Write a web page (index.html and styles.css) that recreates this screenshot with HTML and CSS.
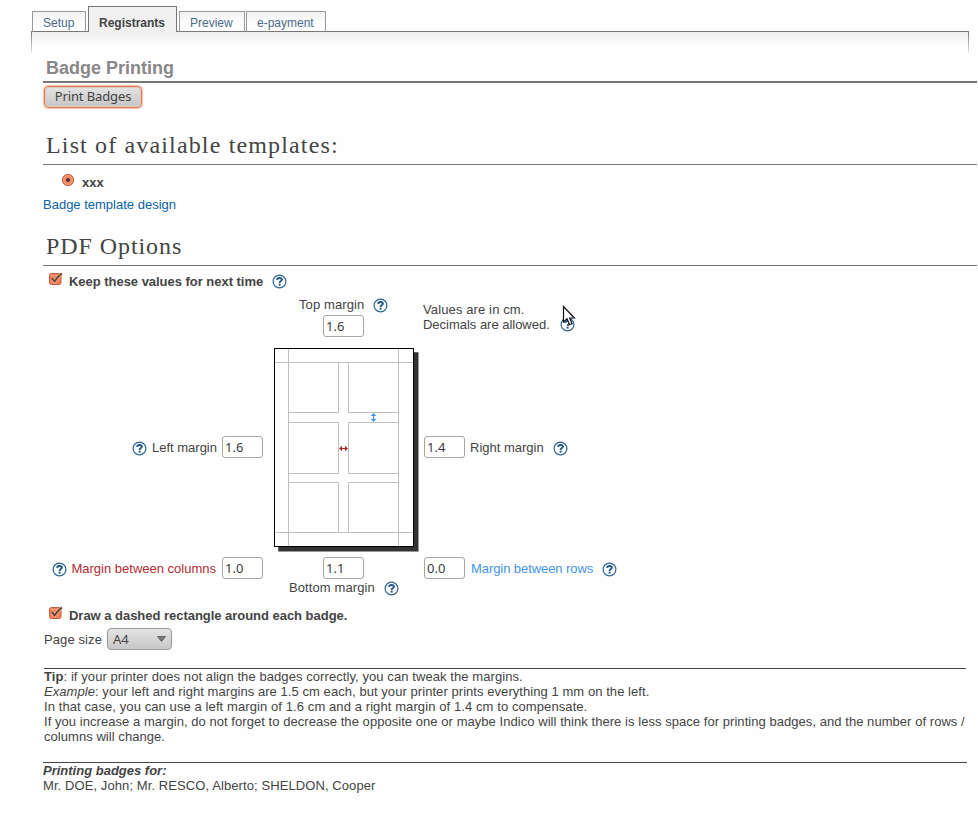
FILE: index.html
```html
<!DOCTYPE html>
<html lang="en">
<head>
<meta charset="utf-8">
<title>Badge Printing</title>
<link rel="stylesheet" href="styles.css">
</head>
<body>
<svg class="defs" width="0" height="0" aria-hidden="true">
  <symbol id="help" viewBox="0 0 15 15">
    <circle cx="7.5" cy="7.5" r="6.4" fill="#fff" stroke="#2f6798" stroke-width="1.2"/>
    <path d="M5.1 5.9C5.2 4.5 6.2 4 7.500 4S9.900 4.700 9.900 5.800C9.900 7.100 7.600 7.100 7.600 8.900" fill="none" stroke="#20568a" stroke-width="1.9"/>
    <rect x="6.600" y="9.700" width="2" height="1.900" fill="#20568a"/>
  </symbol>
  <symbol id="check" viewBox="0 0 16 14">
    <rect x="1.5" y="1.5" width="11.5" height="11" rx="2" fill="#f58259" stroke="#bd5b3d"/>
    <path d="M3 3.5H11" stroke="#f8a183"/>
    <path d="M3.7 6.4L6.6 9.4C8.4 6.2 10.4 3.6 13.9 1.5" fill="none" stroke="#fac0a8" stroke-width="3"/>
    <path d="M3.7 6.2L6.6 9.4C8.4 6.2 10.4 3.6 13.9 1.5" fill="none" stroke="#634036" stroke-width="1.9"/>
  </symbol>
</svg>
<nav class="tabs">
  <a class="tab setup">Setup</a>
  <a class="tab active">Registrants</a>
  <a class="tab preview">Preview</a>
  <a class="tab payment">e-payment</a>
</nav>
<div class="panel-top"></div>
<main>
  <h1>Badge Printing</h1>
  <button class="print">Print Badges</button>
  <h2 class="templates">List of available templates:</h2>
  <div class="template">
    <svg width="14" height="14" viewBox="0 0 14 14"><circle cx="7" cy="7" r="5.7" fill="#f58a62" stroke="#c8603f"/><circle cx="7" cy="7" r="4.3" fill="none" stroke="#f9a384" stroke-width=".8"/><circle cx="7" cy="7" r="2" fill="#4d332b"/></svg>
    <b>xxx</b>
  </div>
  <a class="design">Badge template design</a>
  <h2 class="options">PDF Options</h2>
  <div class="option keep"><svg width="16" height="14"><use href="#check"/></svg><b>Keep these values for next time</b><svg class="help" width="15" height="15"><use href="#help"/></svg></div>
  <section class="margins">
    <div class="top">
      <div class="caption"><span>Top margin</span><svg class="help" width="15" height="15"><use href="#help"/></svg></div>
      <input value="1.6">
    </div>
    <div class="hint">
      <p><span class="cm">Values are in cm.</span><br>Decimals are allowed.</p>
      <svg class="help" width="15" height="15"><use href="#help"/></svg>
      <svg class="cursor" width="14" height="22" viewBox="0 0 14 22"><path d="M1.5 1.5V17L5 13.8L7.6 19.8L10.1 18.7L7.6 13H12.4Z" fill="#fff" stroke="#111" stroke-width="1.2"/></svg>
    </div>
    <div class="side left"><svg class="help" width="15" height="15"><use href="#help"/></svg><span>Left margin</span><input value="1.6"></div>
    <svg class="sheet" width="146" height="205" viewBox="0 0 146 205">
      <rect x="4" y="4" width="141" height="200" rx="1" fill="#999"/>
      <rect x="4.500" y="4.500" width="139.500" height="198.500" fill="#333"/>
      <rect x=".5" y=".5" width="139" height="198" fill="#fff" stroke="#000"/>
      <path d="M14.5 1V198M124.5 1V198M1 14.5H139M1 184.5H139M64.5 15V64.5H15M74.5 15V64.5H124M15 74.5H64.5V125.5H15M124 74.5H74.5V125.5H124M15 134.5H64.5V184M124 134.5H74.5V184" fill="none" stroke="#c0c0c0"/>
      <path d="M99.5 66V73M97.5 67.5H101.5M97.5 71.5H101.5" stroke="#3c92e6"/><path d="M99.500 65L102 68H97ZM99.500 74L102 71H97Z" fill="#3c92e6"/>
      <path d="M66 100.500H73M67.500 98.500V102.500M71.500 98.500V102.500" stroke="#b22222"/><path d="M65 100.500L68 98V103ZM74 100.500L71 98V103Z" fill="#b22222"/>
    </svg>
    <div class="side right"><input value="1.4"><span>Right margin</span><svg class="help" width="15" height="15"><use href="#help"/></svg></div>
    <div class="side left columns"><svg class="help" width="15" height="15"><use href="#help"/></svg><span>Margin between columns</span><input value="1.0"></div>
    <div class="bottom">
      <input value="1.1">
      <div class="caption"><span>Bottom margin</span><svg class="help" width="15" height="15"><use href="#help"/></svg></div>
    </div>
    <div class="side right rows"><input value="0.0"><span>Margin between rows</span><svg class="help" width="15" height="15"><use href="#help"/></svg></div>
  </section>
  <div class="option dashed"><svg width="16" height="14"><use href="#check"/></svg><b>Draw a dashed rectangle around each badge.</b></div>
  <div class="size"><span>Page size</span><div class="select">A4<svg width="9" height="6" viewBox="0 0 9 6"><path d="M.5 .5H8.500L4.500 5.500Z" fill="#777" stroke="#666"/></svg></div></div>
  <div class="tip">
    <p class="intro"><b>Tip</b>: if your printer does not align the badges correctly, you can tweak the margins.</p>
    <p class="example"><i>Example</i>: your left and right margins are 1.5 cm each, but your printer prints everything 1 mm on the left.</p>
    <p class="advice">In that case, you can use a left margin of 1.6 cm and a right margin of 1.4 cm to compensate.</p>
    <p class="warning">If you increase a margin, do not forget to decrease the opposite one or maybe Indico will think there is less space for printing badges, and the number of rows /<br>columns will change.</p>
  </div>
  <div class="people"><b><i>Printing badges for:</i></b><p>Mr. DOE, John; Mr. RESCO, Alberto; SHELDON, Cooper</p></div>
</main>
</body>
</html>
```
FILE: styles.css
```css
* { box-sizing: border-box; }
body { margin: 0; background: #fefefe; color: #444; font: 13px/15px "Liberation Sans", Arial, sans-serif; height: 815px; overflow: hidden; }
svg { display: block; flex: none; }
p { margin: 0; }
.defs { position: absolute; }
.tabs { display: flex; align-items: flex-end; height: 32px; padding-left: 32px; }
.tab { height: 21px; border: 1px solid #999; border-bottom-color: #777; background: linear-gradient(#f1f3f4, #fff 80%); color: #4a6b88; font-size: 12px; line-height: 22px; padding-left: 10px; white-space: nowrap; }
.setup { width: 54px; margin-right: 2px; }
.active { z-index: 1; width: 89px; height: 26px; border-color: #777; border-bottom: 0; background: #f0f0f0; color: #444; font-weight: bold; line-height: 32px; margin-right: 2px; }
.preview { width: 66px; margin-right: 1px; }
.payment { width: 80px; }
.panel-top { display: flex; justify-content: space-between; height: 20px; margin: -1px 9px 0 31px; border-top: 1px solid #777; background: linear-gradient(#f0f0f0, #fefefe 80%); }
.panel-top::before, .panel-top::after { content: ""; width: 1px; height: 20px; background: linear-gradient(#777, #ddd); }
main { padding: 0 1px 0 43px; }
h1 { margin: 0; height: 32px; padding: 7px 0 0 3px; border-bottom: 2px solid #777; color: #888; font-size: 18px; line-height: 20px; }
.print { display: block; width: 98px; height: 22px; margin: 3px 0 0 1px; padding: 0 0 1px; border: 1px solid #dc7d59; border-radius: 4px; box-shadow: inset 0 0 0 1px #e6c9bd, 0 0 1px 1px #f6c1aa; background: linear-gradient(#e4e4e4, #c5c5c5); color: #444; font: 13px/19px "Noto Sans", sans-serif; letter-spacing: -.12px; }
h2 { margin: 0; padding-left: 3px; border-bottom: 1px solid #777; font: 24px/28px "Liberation Serif", serif; letter-spacing: 1.15px; white-space: nowrap; }
.templates { margin-top: 23px; height: 34px; }
.template { display: flex; height: 32px; padding: 8px 0 0 18px; }
.template b { margin: 2px 0 0 7px; }
.design { display: block; height: 35px; color: #0b63a5; }
.options { height: 34px; letter-spacing: .92px; }
.option { display: flex; padding-left: 5px; white-space: nowrap; }
.option b { margin: 2px 0 0 5px; letter-spacing: -.03px; }
.keep { height: 31px; padding-top: 6px; }
.keep .help { margin: 2px 0 0 9px; }
.margins { display: grid; grid-template-columns: 221px 159px 300px; grid-template-rows: 50px 209px 50px; }
.top { grid-column: 2; padding-left: 35px; }
.caption { display: flex; }
.caption span { letter-spacing: .1px; }
.caption .help { margin: 1px 0 0 9px; }
input { display: block; flex: none; width: 41px; height: 22px; padding: 0 0 0 2px; border: 1px solid #aaa69f; border-radius: 3px; outline: 0; background: #fff; color: #3c3c3c; font: 13px/20px "Noto Sans", sans-serif; }
.top input { margin: 2px 0 0 24px; }
.hint { position: relative; display: flex; }
.hint p { margin: 5px 0 0; letter-spacing: -.02px; }
.hint .cm { letter-spacing: .12px; }
.hint .help { margin: 20px 0 0 10px; }
.cursor { position: absolute; left: 139px; top: 8px; }
.side { display: flex; align-items: flex-start; padding-top: 89px; }
.side span { margin: 4px 0 0 5px; }
.side .help { margin: 5px 0 0 9px; }
.left { justify-content: flex-end; padding-right: 1px; }
.left span { margin-right: 5px; }
.left .help { margin: 5px 0 0; }
.right { padding-left: 1px; }
.sheet { margin: 1px 0 0 10px; }
.columns, .rows { padding-top: 1px; }
.columns span { color: #b22c35; margin-left: 4px; margin-right: 6px; }
.rows span { color: #4595e6; margin-left: 6px; letter-spacing: -.07px; }
.bottom { padding: 1px 0 0 25px; }
.bottom input { margin-left: 34px; }
.bottom .caption { margin-top: 1px; }
.dashed { height: 22px; }
.size { display: flex; height: 40px; padding-left: 1px; }
.size span { margin: 4px 5px 0 0; letter-spacing: .1px; }
.select { display: flex; align-items: center; justify-content: space-between; width: 65px; height: 22px; padding: 0 5px; border: 1px solid #999; border-radius: 4px; background: linear-gradient(#e4e4e4, #c7c7c7); font: 13px/20px "Noto Sans", sans-serif; }
.tip { width: 922px; height: 94px; margin-left: 1px; border-top: 1px solid #444; white-space: nowrap; }
.intro { letter-spacing: .08px; }
.example { letter-spacing: .06px; }
.advice { letter-spacing: .093px; }
.warning { letter-spacing: .05px; }
.people { width: 924px; border-top: 1px solid #444; }
.people p { letter-spacing: .09px; }
```
